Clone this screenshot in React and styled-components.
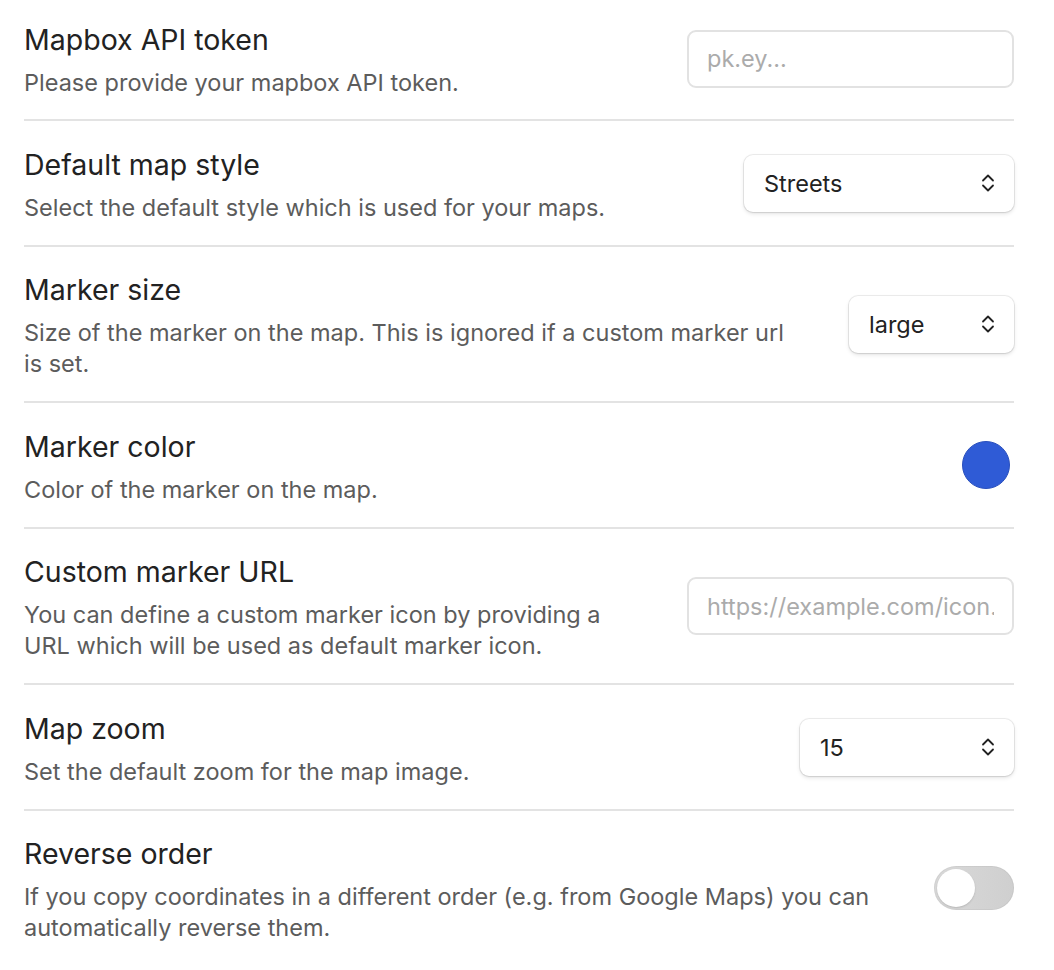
import React from 'react';
import styled, { createGlobalStyle } from 'styled-components';

const GlobalStyle = createGlobalStyle`
    body {
        margin: 0;
        background: #ffffff;
        font-family: Inter, "Noto Sans", "Liberation Sans", sans-serif;
        -webkit-font-smoothing: antialiased;
    }
`;

const settings = [
    {
        name: 'Mapbox API token',
        desc: 'Please provide your mapbox API token.',
        control: { type: 'text', placeholder: 'pk.ey...' },
    },
    {
        name: 'Default map style',
        desc: 'Select the default style which is used for your maps.',
        control: { type: 'select', value: 'Streets', width: 270 },
    },
    {
        name: 'Marker size',
        desc: 'Size of the marker on the map. This is ignored if a custom marker url is set.',
        control: { type: 'select', value: 'large', width: 165 },
    },
    {
        name: 'Marker color',
        desc: 'Color of the marker on the map.',
        control: { type: 'color', value: '#2f5bd6' },
    },
    {
        name: 'Custom marker URL',
        desc: 'You can define a custom marker icon by providing a URL which will be used as default marker icon.',
        control: { type: 'text', placeholder: 'https://example.com/icon.png' },
    },
    {
        name: 'Map zoom',
        desc: 'Set the default zoom for the map image.',
        control: { type: 'select', value: '15', width: 214 },
    },
    {
        name: 'Reverse order',
        desc: 'If you copy coordinates in a different order (e.g. from Google Maps) you can automatically reverse them.',
        control: { type: 'toggle' },
    },
];

function UpDown() {
    return (
        <svg width="14" height="20" viewBox="0 0 14 20" fill="none" stroke="#222" strokeWidth="1.8" strokeLinecap="round" strokeLinejoin="round">
            <path d="M2 7.5 L7 2.5 L12 7.5" />
            <path d="M2 12.5 L7 17.5 L12 12.5" />
        </svg>
    );
}

function Control({ control }) {
    switch (control.type) {
        case 'text':
            return <TextInput type="text" placeholder={control.placeholder} />;
        case 'select':
            return (
                <Select $width={control.width}>
                    <span>{control.value}</span>
                    <UpDown />
                </Select>
            );
        case 'color':
            return <Swatch $color={control.value} />;
        case 'toggle':
            return (
                <Toggle>
                    <Knob />
                </Toggle>
            );
        default:
            return null;
    }
}

export default function App() {
    return (
        <>
            <GlobalStyle />
            <Page>
                {settings.map((s) => (
                    <Item key={s.name}>
                        <Info>
                            <Name>{s.name}</Name>
                            <Description>{s.desc}</Description>
                        </Info>
                        <ControlWrap>
                            <Control control={s.control} />
                        </ControlWrap>
                    </Item>
                ))}
            </Page>
        </>
    );
}

const Page = styled.div`
    padding: 0 40px 0 24px;
`;

const Item = styled.div`
    display: flex;
    align-items: center;
    padding: 27.5px 0 22px;
    border-top: 2px solid #e3e3e3;

    &:first-child {
        border-top: none;
        padding-top: 24px;
        padding-bottom: 21px;
    }
`;

const Info = styled.div`
    flex: 1 1 auto;
    margin-right: 50px;
`;

const Name = styled.div`
    font-size: 28.5px;
    line-height: 32px;
    color: #222222;
`;

const Description = styled.div`
    margin-top: 11px;
    font-size: 23.5px;
    line-height: 31px;
    color: #5c5c5c;
`;

const ControlWrap = styled.div`
    flex: 0 0 auto;
    display: flex;
    justify-content: flex-end;
    align-items: center;
    margin-bottom: 5px;
`;

const TextInput = styled.input`
    box-sizing: border-box;
    width: 327px;
    height: 58px;
    padding: 0 18px;
    border: 2px solid #e2e2e2;
    border-radius: 9px;
    background: #ffffff;
    font-family: inherit;
    font-size: 23.5px;
    color: #222222;
    outline: none;

    &::placeholder {
        color: #ababab;
    }
`;

const Select = styled.div`
    box-sizing: border-box;
    width: ${(p) => p.$width}px;
    height: 57px;
    padding: 0 19px 0 20px;
    display: flex;
    align-items: center;
    justify-content: space-between;
    background: #ffffff;
    border-radius: 9px;
    box-shadow: 0 0 0 1px rgba(0, 0, 0, 0.07), 0 2px 4px rgba(0, 0, 0, 0.1), 0 1px 2px rgba(0, 0, 0, 0.06);
    font-size: 23.5px;
    color: #222222;
`;

const Swatch = styled.div`
    width: 46px;
    height: 46px;
    margin-right: 4px;
    border-radius: 50%;
    background: ${(p) => p.$color};
    border: 1px solid #2a50bd;
`;

const Toggle = styled.div`
    box-sizing: border-box;
    width: 80px;
    height: 44px;
    padding: 3px;
    border-radius: 22px;
    background: linear-gradient(90deg, #d9d9d9, #cfcfcf);
    box-shadow: inset 0 0 0 1px rgba(0, 0, 0, 0.04);
    display: flex;
    align-items: center;
`;

const Knob = styled.div`
    width: 38px;
    height: 38px;
    border-radius: 50%;
    background: #ffffff;
    box-shadow: 0 1px 2px rgba(0, 0, 0, 0.15);
`;
